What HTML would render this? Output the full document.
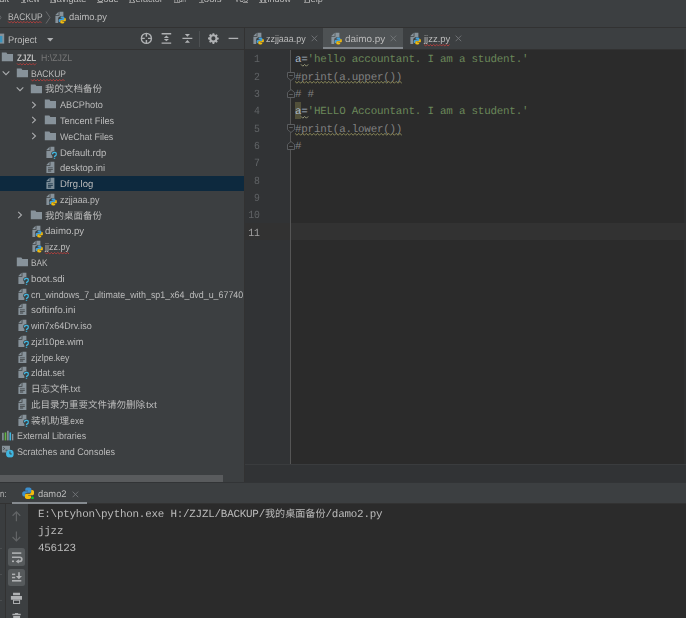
<!DOCTYPE html>
<html lang="zh"><head><meta charset="utf-8"><title>PyCharm</title>
<style>
html,body{margin:0;padding:0}
body{width:686px;height:618px;overflow:hidden;position:relative;background:#3c3f41;text-rendering:geometricPrecision;font-family:"Liberation Sans",sans-serif;font-size:9.6px;color:#bbb}
#root{position:absolute;left:0;top:0;width:686px;height:618px;overflow:hidden;filter:blur(.4px)}
.t{position:absolute;white-space:nowrap;transform-origin:0 50%;display:block}
.sx{display:inline-block;transform-origin:0 50%;white-space:nowrap}
.cjk{display:inline-block;white-space:nowrap;font-family:"Liberation Sans","Noto Sans CJK SC",sans-serif;font-size:9.5px;color:#bbb}
.ic{position:absolute;overflow:visible}
.box{position:absolute}
#tree{position:absolute;left:0;top:0;width:244px;height:482px;overflow:hidden}
.sel{position:absolute;left:0;width:244px;background:#0d293e}
.code{position:absolute;left:295.0px;height:17.34px;line-height:17.34px;font-family:"Liberation Mono",monospace;font-size:10.9px;white-space:pre;letter-spacing:-0.231px}
.con{left:38px;color:#bbb}
.ln{position:absolute;left:240px;width:20px;text-align:right;transform:scaleX(.9);transform-origin:100% 50%;height:17.34px;line-height:17.34px;font-family:"Liberation Mono",monospace;font-size:10.9px}
.caret{position:absolute;left:245px;width:441px;background:#323232}
.hl{position:absolute;background:#52503a}
</style></head>
<body>

<svg width="0" height="0" style="position:absolute">
<defs>
<symbol id="folder" viewBox="0 0 16 16"><path fill="#9aa7b0" fill-opacity=".8" d="M1,12.700H15V3.900H7.980L6.700,1.900H1Z"/></symbol>
<symbol id="txt" viewBox="0 0 16 16"><g fill="#9aa7b0" fill-opacity=".8"><path d="M7,1 3,5H7Z"/><path fill-rule="evenodd" d="M8,1V6H3V15H13V1ZM5,13V12H9V13ZM5,11V10H11V11ZM5,9V8H11V9Z"/></g></symbol>
<symbol id="unk" viewBox="0 0 16 16"><g fill="#9aa7b0" fill-opacity=".8"><path d="M7,1 3,5H7Z"/><path d="M8,1V6H3V15H10.500V12.500L9,10.500V8.500L11,6.500H13V1Z"/></g>
<path fill="none" stroke="#40b6e0" stroke-width="1.700" d="M10.600,10.200c0-3 5-3 5,0 0,2-2.500,1.700-2.500,3.700"/><rect x="12.200" y="14.700" width="1.800" height="1.600" fill="#40b6e0"/></symbol>
<symbol id="py" viewBox="0 0 16 16"><g fill="#9aa7b0" fill-opacity=".8"><path d="M7,1 3,5H7Z"/><path d="M8,1V6H3V15H6.5V8.5L9,6.500H13V1Z"/></g>
<g transform="translate(11.85 11.4) scale(.9) translate(-11.85 -11.5)"><path fill="#429fd6" d="M11.6,6.6c-1.5,0-2.4,.5-2.4,1.6v1.1h2.5v.5H8.3c-1.1,0-1.8,.8-1.8,2.3 0,1.5 .6,2.3 1.700,2.300h.9v-1.3c0-1 .8-1.8 1.9-1.8h2.3c.8,0 1.3-.6 1.3-1.4V8.200c0-1-.9-1.6-3-1.6z"/>
<path fill="#f2bc0e" d="M11.9,16.4c1.5,0 2.4-.5 2.4-1.6v-1.1h-2.5v-.5h3.4c1.1,0 1.8-.8 1.8-2.3 0-1.5-.6-2.3-1.7-2.3h-.9v1.3c0,1-.8,1.8-1.9,1.8h-2.3c-.8,0-1.3,.6-1.3,1.400v1.7c0,1 .9,1.6 3,1.6z"/></g></symbol>
<symbol id="pyrun" viewBox="0 0 16 16">
<path fill="#3c8fce" d="M7.9,.8c-2.3,0-3.6,.8-3.6,2.3v1.8h3.7v.7H2.9C1.3,5.600 .2,6.800 .2,9.000c0,2.200 .9,3.400 2.500,3.400h1.400v-2c0-1.500 1.200-2.700 2.800-2.700h3.500c1.200,0 2-.9 2-2.100V3.100c0-1.400-1.400-2.300-4.500-2.300z"/>
<path fill="#f2bc0e" d="M8.3,15.700c2.300,0 3.600-.8 3.600-2.300v-1.800H8.200v-.7h5.100c1.600,0 2.700-1.200 2.700-3.400 0-2.200-.9-3.400-2.500-3.400h-1.400v2c0,1.500-1.200,2.700-2.800,2.700H5.800c-1.200,0-2,.9-2,2.100v2.500c0,1.400 1.400,2.300 4.500,2.300z"/>
<circle cx="13.800" cy="14.300" r="1.800" fill="#12c52b"/></symbol>
<symbol id="ch_down" viewBox="0 0 16 16"><polyline fill="none" stroke="#a5a7a9" stroke-width="1.25" points="4.2,6.2 8,10 11.8,6.2"/></symbol>
<symbol id="ch_right" viewBox="0 0 16 16"><polyline fill="none" stroke="#a5a7a9" stroke-width="1.25" points="6.2,4.2 10,8 6.2,11.8"/></symbol>
<symbol id="libs" viewBox="0 0 16 16"><rect x="1.400" y="3.500" width="2" height="9.500" fill="#9aa7b0" fill-opacity=".8"/><rect x="4.600" y="3" width="2" height="10" fill="#62b543"/><rect x="7.600" y="1" width="2" height="12" fill="#9aa7b0" fill-opacity=".8"/><rect x="10.600" y="3" width="2" height="10" fill="#40b6e0"/><rect x="13.700" y="5" width="1.800" height="8" fill="#9aa7b0" fill-opacity=".8"/></symbol>
<symbol id="scr" viewBox="0 0 16 16"><path fill="#9aa7b0" fill-opacity=".8" d="M1.200,1H11.200V5.800A5,5 0 0 0 6.300,9.500H1.200Z"/><path fill="none" stroke="#3c3f41" stroke-width="1" d="M2.700,3 4.700,4.500 2.700,6M5.700,6.500H8"/><circle cx="11.200" cy="10.800" r="4.900" fill="#40b6e0"/><path fill="none" stroke="#3c3f41" stroke-width="1.200" d="M11.200,8V11.200H13.500"/></symbol>
<symbol id="projwin" viewBox="0 0 16 16"><rect x="1" y="2" width="13" height="12.500" fill="#9aa7b0" fill-opacity=".8"/><rect x="2.500" y="5" width="9.200" height="8" fill="#3a93bd"/></symbol>
<symbol id="locate" viewBox="0 0 16 16"><circle cx="8" cy="8" r="6.300" fill="none" stroke="#afb1b3" stroke-width="1.700"/><path stroke="#afb1b3" stroke-width="1.800" d="M8,1.500V6M8,10V14.500M1.500,8H6M10,8H14.500"/></symbol>
<symbol id="expandall" viewBox="0 0 16 16"><path fill="#afb1b3" d="M2,1.300H14V3H2ZM2,13H14V14.700H2ZM8,4.300 11.200,7.500H4.800ZM8,11.700 4.800,8.700H11.200Z"/></symbol>
<symbol id="collapseall" viewBox="0 0 16 16"><path fill="#afb1b3" d="M1.800,7.200H14.200V8.800H1.800ZM8,6 4.800,2.600H11.200ZM8,10 11.200,13.400H4.800Z"/></symbol>
<symbol id="gear" viewBox="0 0 16 16"><path transform="translate(8 8) scale(.93) translate(-8 -8)" fill="#afb1b3" fill-rule="evenodd" d="M6.900,1h2.200l.4,1.900 1.100,.5 1.700-1 1.500,1.500-1,1.700 .5,1.100 1.900,.4v2.200l-1.900,.4-.5,1.100 1,1.700-1.500,1.500-1.700-1-1.100,.5-.4,1.900H6.900l-.4-1.900-1.100-.5-1.700,1-1.500-1.500 1-1.700-.5-1.100L.8,9.100V6.900l1.900-.4 .5-1.100-1-1.700 1.500-1.500 1.700,1 1.100-.5zM8,5.200a2.800,2.800 0 1 0 0,5.600 2.800,2.800 0 0 0 0-5.600z"/></symbol>
<symbol id="minus" viewBox="0 0 16 16"><rect x="2" y="7.200" width="12" height="1.600" fill="#afb1b3"/></symbol>
<symbol id="close" viewBox="0 0 16 16"><path stroke="#74787a" stroke-width="1.100" fill="none" d="M4.500,4.500 11.500,11.500M11.500,4.500 4.500,11.500"/></symbol>
<symbol id="up" viewBox="0 0 16 16"><path fill="none" stroke="#afb1b3" stroke-width="1.500" d="M8,14V2.500M3.200,7.200 8,2.400 12.800,7.200"/></symbol>
<symbol id="down" viewBox="0 0 16 16"><path fill="none" stroke="#afb1b3" stroke-width="1.500" d="M8,2V13.500M3.200,8.800 8,13.600 12.800,8.800"/></symbol>
<symbol id="wrap" viewBox="0 0 16 16"><path fill="none" stroke="#afb1b3" stroke-width="1.800" d="M2,3.500H14M2,12.500H5M2,8H11.500a2.250,2.250 0 0 1 0,4.500H8.500"/><path fill="#afb1b3" d="M9.500,10 6.500,12.500 9.500,15Z"/></symbol>
<symbol id="scrollend" viewBox="0 0 16 16"><path fill="#afb1b3" d="M2,13H14V14.500H2ZM2,4H6V5.500H2ZM2,8H6V9.500H2ZM10,2H12V7.500H14.200L11,11.200 7.800,7.500H10Z"/></symbol>
<symbol id="print" viewBox="0 0 16 16"><path fill="#afb1b3" d="M3.800,.800H12.500V4H3.800ZM1.100,5H15V9.800H1.100Z"/><rect x="4.400" y="10.300" width="7.600" height="4.100" fill="none" stroke="#afb1b3" stroke-width="1.200"/></symbol>
<symbol id="trash" viewBox="0 0 16 16"><path fill="#afb1b3" d="M6.300,1.200H10.200V2.200H13.400V4.200H3V2.200H6.300ZM4,5.100H12.600V15H4Z"/></symbol>
<symbol id="fold_s" viewBox="0 0 8 9"><path fill="#2b2b2b" stroke="#606366" stroke-width=".9" d="M.5,.5H7.500V5.500L4,8.500 .5,5.500Z"/><path stroke="#606366" stroke-width=".9" d="M2.200,3.500H5.800"/></symbol>
<symbol id="fold_e" viewBox="0 0 8 9"><path fill="#2b2b2b" stroke="#606366" stroke-width=".9" d="M.5,8.500H7.500V3.500L4,.5 .5,3.500Z"/><path stroke="#606366" stroke-width=".9" d="M2.200,5.500H5.800"/></symbol>
</defs></svg>

<div id="root">
<!-- editor area -->
<div class="box" style="left:245px;top:50px;width:441px;height:414px;background:#2b2b2b"></div>
<div class="box" style="left:245px;top:50px;width:45px;height:414px;background:#313335"></div>
<div class="box" style="left:684px;top:50px;width:2px;height:414px;background:#2e2f30"></div>
<div class="box" style="left:245px;top:464px;width:441px;height:18px;background:#313335"></div>
<div class="box" style="left:245px;top:464px;width:441px;height:1px;background:#3a3c3e"></div>
<div class="box" style="left:0;top:27px;width:686px;height:1px;background:#323232"></div>
<div class="box" style="left:0;top:49px;width:686px;height:1px;background:#323232"></div>
<div class="box" style="left:244px;top:28px;width:1px;height:454px;background:#323232"></div>
<div class="caret" style="top:223px;height:17px"></div><div class="hl" style="left:294.8px;top:101.5px;width:6.3px;height:17.2px"></div>
<div class="box" style="left:290px;top:50px;width:1px;height:414px;background:#555555"></div>
<div class="code" style="top:52.30px"><span style="color:#a9b7c6">a=</span><span style="color:#6a8759">'hello accountant. I am a student.'</span></div><div class="code" style="top:69.64px"><span style="color:#808080">#print(a.upper())</span></div><div class="code" style="top:86.98px"><span style="color:#808080"># #</span></div><div class="code" style="top:104.32px"><span style="color:#a9b7c6">a=</span><span style="color:#6a8759">'HELLO Accountant. I am a student.'</span></div><div class="code" style="top:121.66px"><span style="color:#808080">#print(a.lower())</span></div><div class="code" style="top:139.00px"><span style="color:#808080">#</span></div><div class="ln" style="top:52.30px;color:#606366">1</div><div class="ln" style="top:69.64px;color:#606366">2</div><div class="ln" style="top:86.98px;color:#606366">3</div><div class="ln" style="top:104.32px;color:#606366">4</div><div class="ln" style="top:121.66px;color:#606366">5</div><div class="ln" style="top:139.00px;color:#606366">6</div><div class="ln" style="top:156.34px;color:#606366">7</div><div class="ln" style="top:173.68px;color:#606366">8</div><div class="ln" style="top:191.02px;color:#606366">9</div><div class="ln" style="top:208.36px;color:#606366">10</div><div class="ln" style="top:225.70px;color:#a4a3a3">11</div><svg class="ic" style="left:295.0px;top:80.8px;width:107.3px;height:2.8px" viewBox="0 0 107.3 2.8"><polyline fill="none" stroke="#8a8858" stroke-width="1.0" points="0.0,0.4 1.9,2.2 3.8,0.4 5.6,2.2 7.5,0.4 9.4,2.2 11.2,0.4 13.1,2.2 15.0,0.4 16.9,2.2 18.8,0.4 20.6,2.2 22.5,0.4 24.4,2.2 26.2,0.4 28.1,2.2 30.0,0.4 31.9,2.2 33.8,0.4 35.6,2.2 37.5,0.4 39.4,2.2 41.2,0.4 43.1,2.2 45.0,0.4 46.9,2.2 48.8,0.4 50.6,2.2 52.5,0.4 54.4,2.2 56.2,0.4 58.1,2.2 60.0,0.4 61.9,2.2 63.8,0.4 65.6,2.2 67.5,0.4 69.4,2.2 71.2,0.4 73.1,2.2 75.0,0.4 76.9,2.2 78.8,0.4 80.6,2.2 82.5,0.4 84.4,2.2 86.2,0.4 88.1,2.2 90.0,0.4 91.9,2.2 93.8,0.4 95.6,2.2 97.5,0.4 99.4,2.2 101.2,0.4 103.1,2.2 105.0,0.4 106.9,2.2"/></svg><svg class="ic" style="left:295.0px;top:132.9px;width:107.3px;height:2.8px" viewBox="0 0 107.3 2.8"><polyline fill="none" stroke="#8a8858" stroke-width="1.0" points="0.0,0.4 1.9,2.2 3.8,0.4 5.6,2.2 7.5,0.4 9.4,2.2 11.2,0.4 13.1,2.2 15.0,0.4 16.9,2.2 18.8,0.4 20.6,2.2 22.5,0.4 24.4,2.2 26.2,0.4 28.1,2.2 30.0,0.4 31.9,2.2 33.8,0.4 35.6,2.2 37.5,0.4 39.4,2.2 41.2,0.4 43.1,2.2 45.0,0.4 46.9,2.2 48.8,0.4 50.6,2.2 52.5,0.4 54.4,2.2 56.2,0.4 58.1,2.2 60.0,0.4 61.9,2.2 63.8,0.4 65.6,2.2 67.5,0.4 69.4,2.2 71.2,0.4 73.1,2.2 75.0,0.4 76.9,2.2 78.8,0.4 80.6,2.2 82.5,0.4 84.4,2.2 86.2,0.4 88.1,2.2 90.0,0.4 91.9,2.2 93.8,0.4 95.6,2.2 97.5,0.4 99.4,2.2 101.2,0.4 103.1,2.2 105.0,0.4 106.9,2.2"/></svg><svg class="ic" style="left:301.0px;top:63.5px;width:7.2px;height:2.8px" viewBox="0 0 7.2 2.8"><polyline fill="none" stroke="#9a9a78" stroke-width="1.0" points="0.0,0.4 1.8,2.2 3.6,0.4 5.4,2.2 7.2,0.4"/></svg><svg class="ic" style="left:301.0px;top:115.5px;width:7.2px;height:2.8px" viewBox="0 0 7.2 2.8"><polyline fill="none" stroke="#9a9a78" stroke-width="1.0" points="0.0,0.4 1.8,2.2 3.6,0.4 5.4,2.2 7.2,0.4"/></svg><svg class="ic" style="left:286.6px;top:71.84px;width:8px;height:9px" viewBox="0 0 8 9"><use href="#fold_s"/></svg><svg class="ic" style="left:286.6px;top:89.18px;width:8px;height:9px" viewBox="0 0 8 9"><use href="#fold_e"/></svg><svg class="ic" style="left:286.6px;top:123.86px;width:8px;height:9px" viewBox="0 0 8 9"><use href="#fold_s"/></svg><svg class="ic" style="left:286.6px;top:141.20px;width:8px;height:9px" viewBox="0 0 8 9"><use href="#fold_e"/></svg>
<!-- project tree -->
<div id="tree">
<svg class="ic" style="left:1.0px;top:51.0px;width:12.8px;height:12.8px;" viewBox="0 0 16 16"><use href="#folder"/></svg><span class="t " style="left:16.6px;top:50.95px;height:15.77px;line-height:15.77px;color:#bbb;font-size:9.6px;font-weight:bold;transform:scaleX(0.8422);">ZJZL</span><span class="t " style="left:40.6px;top:50.95px;height:15.77px;line-height:15.77px;color:#787878;font-size:9.6px;font-weight:normal;transform:scaleX(0.9117);">H:\ZJZL</span><svg class="ic" style="left:15.5px;top:66.8px;width:12.8px;height:12.8px;" viewBox="0 0 16 16"><use href="#folder"/></svg><svg class="ic" style="left:0.95px;top:67.77px;width:10px;height:10px" viewBox="-5 -5 10 10"><polyline fill="none" stroke="#adafb1" stroke-width="1.05" points="-3.3,-1.6 0,1.7 3.3,-1.6"/></svg><span class="t " style="left:31.1px;top:66.72px;height:15.77px;line-height:15.77px;color:#bbb;font-size:9.6px;font-weight:normal;transform:scaleX(0.8871);">BACKUP</span><svg class="ic" style="left:29.7px;top:82.6px;width:12.8px;height:12.8px;" viewBox="0 0 16 16"><use href="#folder"/></svg><svg class="ic" style="left:15.15px;top:83.54px;width:10px;height:10px" viewBox="-5 -5 10 10"><polyline fill="none" stroke="#adafb1" stroke-width="1.05" points="-3.3,-1.6 0,1.7 3.3,-1.6"/></svg><span class="t " style="left:45.1px;top:82.49px;height:15.77px;line-height:15.77px;color:#bbb;font-size:9.6px;font-weight:normal;"><span class="cjk" style="width:56.00px;">我的文档备份</span></span><svg class="ic" style="left:44.0px;top:98.4px;width:12.8px;height:12.8px;" viewBox="0 0 16 16"><use href="#folder"/></svg><svg class="ic" style="left:28.85px;top:99.51px;width:10px;height:10px" viewBox="-5 -5 10 10"><polyline fill="none" stroke="#adafb1" stroke-width="1.05" points="-1.8,-3.1 1.5,0 -1.8,3.1"/></svg><span class="t " style="left:59.5px;top:98.26px;height:15.77px;line-height:15.77px;color:#bbb;font-size:9.6px;font-weight:normal;transform:scaleX(0.9554);">ABCPhoto</span><svg class="ic" style="left:44.0px;top:114.1px;width:12.8px;height:12.8px;" viewBox="0 0 16 16"><use href="#folder"/></svg><svg class="ic" style="left:28.85px;top:115.28px;width:10px;height:10px" viewBox="-5 -5 10 10"><polyline fill="none" stroke="#adafb1" stroke-width="1.05" points="-1.8,-3.1 1.5,0 -1.8,3.1"/></svg><span class="t " style="left:59.5px;top:114.03px;height:15.77px;line-height:15.77px;color:#bbb;font-size:9.6px;font-weight:normal;transform:scaleX(0.9589);">Tencent Files</span><svg class="ic" style="left:44.0px;top:129.9px;width:12.8px;height:12.8px;" viewBox="0 0 16 16"><use href="#folder"/></svg><svg class="ic" style="left:28.85px;top:131.05px;width:10px;height:10px" viewBox="-5 -5 10 10"><polyline fill="none" stroke="#adafb1" stroke-width="1.05" points="-1.8,-3.1 1.5,0 -1.8,3.1"/></svg><span class="t " style="left:59.5px;top:129.80px;height:15.77px;line-height:15.77px;color:#bbb;font-size:9.6px;font-weight:normal;transform:scaleX(0.9285);">WeChat Files</span><svg class="ic" style="left:44.0px;top:145.7px;width:12.8px;height:12.8px;" viewBox="0 0 16 16"><use href="#unk"/></svg><span class="t " style="left:59.5px;top:145.57px;height:15.77px;line-height:15.77px;color:#bbb;font-size:9.6px;font-weight:normal;transform:scaleX(0.9866);">Default.rdp</span><svg class="ic" style="left:44.0px;top:161.4px;width:12.8px;height:12.8px;" viewBox="0 0 16 16"><use href="#txt"/></svg><span class="t " style="left:59.5px;top:161.34px;height:15.77px;line-height:15.77px;color:#bbb;font-size:9.6px;font-weight:normal;transform:scaleX(0.9833);">desktop.ini</span><div class="sel" style="top:176px;height:15px"></div><svg class="ic" style="left:44.0px;top:177.2px;width:12.8px;height:12.8px;" viewBox="0 0 16 16"><use href="#txt"/></svg><span class="t " style="left:59.5px;top:177.11px;height:15.77px;line-height:15.77px;color:#bbb;font-size:9.6px;font-weight:normal;transform:scaleX(0.9883);">Dfrg.log</span><svg class="ic" style="left:44.0px;top:193.0px;width:12.8px;height:12.8px;" viewBox="0 0 16 16"><use href="#py"/></svg><span class="t " style="left:59.5px;top:192.88px;height:15.77px;line-height:15.77px;color:#bbb;font-size:9.6px;font-weight:normal;transform:scaleX(0.9212);">zzjjaaa.py</span><svg class="ic" style="left:29.7px;top:208.8px;width:12.8px;height:12.8px;" viewBox="0 0 16 16"><use href="#folder"/></svg><svg class="ic" style="left:14.65px;top:209.90px;width:10px;height:10px" viewBox="-5 -5 10 10"><polyline fill="none" stroke="#adafb1" stroke-width="1.05" points="-1.8,-3.1 1.5,0 -1.8,3.1"/></svg><span class="t " style="left:45.1px;top:208.65px;height:15.77px;line-height:15.77px;color:#bbb;font-size:9.6px;font-weight:normal;"><span class="cjk" style="width:55.90px;">我的桌面备份</span></span><svg class="ic" style="left:29.7px;top:224.5px;width:12.8px;height:12.8px;" viewBox="0 0 16 16"><use href="#py"/></svg><span class="t " style="left:45.1px;top:224.42px;height:15.77px;line-height:15.77px;color:#bbb;font-size:9.6px;font-weight:normal;transform:scaleX(1.0070);">daimo.py</span><svg class="ic" style="left:29.7px;top:240.3px;width:12.8px;height:12.8px;" viewBox="0 0 16 16"><use href="#py"/></svg><span class="t " style="left:45.1px;top:240.19px;height:15.77px;line-height:15.77px;color:#bbb;font-size:9.6px;font-weight:normal;transform:scaleX(0.9342);">jjzz.py</span><svg class="ic" style="left:15.5px;top:256.1px;width:12.8px;height:12.8px;" viewBox="0 0 16 16"><use href="#folder"/></svg><span class="t " style="left:31.1px;top:255.96px;height:15.77px;line-height:15.77px;color:#bbb;font-size:9.6px;font-weight:normal;transform:scaleX(0.8595);">BAK</span><svg class="ic" style="left:15.5px;top:271.8px;width:12.8px;height:12.8px;" viewBox="0 0 16 16"><use href="#unk"/></svg><span class="t " style="left:31.1px;top:271.73px;height:15.77px;line-height:15.77px;color:#bbb;font-size:9.6px;font-weight:normal;transform:scaleX(1.0000);">boot.sdi</span><svg class="ic" style="left:15.5px;top:287.6px;width:12.8px;height:12.8px;" viewBox="0 0 16 16"><use href="#unk"/></svg><span class="t" style="left:31.1px;top:287.50px;height:15.77px;line-height:15.77px;color:#bbb;font-size:9.6px;transform:scaleX(0.9252)">cn_windows_7_ultimate_with_sp1_x64_dvd_u_67740</span><svg class="ic" style="left:15.5px;top:303.4px;width:12.8px;height:12.8px;" viewBox="0 0 16 16"><use href="#txt"/></svg><span class="t " style="left:31.1px;top:303.27px;height:15.77px;line-height:15.77px;color:#bbb;font-size:9.6px;font-weight:normal;transform:scaleX(1.0302);">softinfo.ini</span><svg class="ic" style="left:15.5px;top:319.1px;width:12.8px;height:12.8px;" viewBox="0 0 16 16"><use href="#unk"/></svg><span class="t " style="left:31.1px;top:319.04px;height:15.77px;line-height:15.77px;color:#bbb;font-size:9.6px;font-weight:normal;transform:scaleX(0.9435);">win7x64Drv.iso</span><svg class="ic" style="left:15.5px;top:334.9px;width:12.8px;height:12.8px;" viewBox="0 0 16 16"><use href="#unk"/></svg><span class="t " style="left:31.1px;top:334.81px;height:15.77px;line-height:15.77px;color:#bbb;font-size:9.6px;font-weight:normal;transform:scaleX(0.9560);">zjzl10pe.wim</span><svg class="ic" style="left:15.5px;top:350.7px;width:12.8px;height:12.8px;" viewBox="0 0 16 16"><use href="#txt"/></svg><span class="t " style="left:31.1px;top:350.58px;height:15.77px;line-height:15.77px;color:#bbb;font-size:9.6px;font-weight:normal;transform:scaleX(0.9140);">zjzlpe.key</span><svg class="ic" style="left:15.5px;top:366.4px;width:12.8px;height:12.8px;" viewBox="0 0 16 16"><use href="#unk"/></svg><span class="t " style="left:31.1px;top:366.35px;height:15.77px;line-height:15.77px;color:#bbb;font-size:9.6px;font-weight:normal;transform:scaleX(0.9404);">zldat.set</span><svg class="ic" style="left:15.5px;top:382.2px;width:12.8px;height:12.8px;" viewBox="0 0 16 16"><use href="#txt"/></svg><span class="t " style="left:31.1px;top:382.12px;height:15.77px;line-height:15.77px;color:#bbb;font-size:9.6px;font-weight:normal;"><span class="cjk" style="width:37.32px;">日志文件</span><span class="sx" style="transform:scaleX(0.9677)">.txt</span></span><svg class="ic" style="left:15.5px;top:398.0px;width:12.8px;height:12.8px;" viewBox="0 0 16 16"><use href="#txt"/></svg><span class="t " style="left:31.1px;top:397.89px;height:15.77px;line-height:15.77px;color:#bbb;font-size:9.6px;font-weight:normal;"><span class="cjk" style="width:111.96px;">此目录为重要文件请勿删除</span><span class="sx" style="transform:scaleX(1.0896)">.txt</span></span><svg class="ic" style="left:15.5px;top:413.8px;width:12.8px;height:12.8px;" viewBox="0 0 16 16"><use href="#unk"/></svg><span class="t " style="left:31.1px;top:413.66px;height:15.77px;line-height:15.77px;color:#bbb;font-size:9.6px;font-weight:normal;"><span class="cjk" style="width:37.32px;">装机助理</span><span class="sx" style="transform:scaleX(0.8757)">.exe</span></span><svg class="ic" style="left:1.0px;top:429.5px;width:12.8px;height:12.8px;" viewBox="0 0 16 16"><use href="#libs"/></svg><span class="t " style="left:16.6px;top:429.43px;height:15.77px;line-height:15.77px;color:#bbb;font-size:9.6px;font-weight:normal;transform:scaleX(0.9256);">External Libraries</span><svg class="ic" style="left:1.0px;top:445.3px;width:12.8px;height:12.8px;" viewBox="0 0 16 16"><use href="#scr"/></svg><span class="t " style="left:16.6px;top:445.20px;height:15.77px;line-height:15.77px;color:#bbb;font-size:9.6px;font-weight:normal;transform:scaleX(0.9424);">Scratches and Consoles</span><svg class="ic" style="left:16.6px;top:62.9px;width:19.3px;height:2.6px" viewBox="0 0 19.3 2.6"><polyline fill="none" stroke="#bc3f3c" stroke-width="0.9" points="0.0,0.4 1.6,2.0 3.2,0.4 4.8,2.0 6.4,0.4 8.0,2.0 9.6,0.4 11.2,2.0 12.8,0.4 14.4,2.0 16.0,0.4 17.6,2.0 19.2,0.4"/></svg><svg class="ic" style="left:31.1px;top:78.7px;width:35.0px;height:2.6px" viewBox="0 0 35.0 2.6"><polyline fill="none" stroke="#bc3f3c" stroke-width="0.9" points="0.0,0.4 1.6,2.0 3.2,0.4 4.8,2.0 6.4,0.4 8.0,2.0 9.6,0.4 11.2,2.0 12.8,0.4 14.4,2.0 16.0,0.4 17.6,2.0 19.2,0.4 20.8,2.0 22.4,0.4 24.0,2.0 25.6,0.4 27.2,2.0 28.8,0.4 30.4,2.0 32.0,0.4 33.6,2.0"/></svg><svg class="ic" style="left:45.1px;top:252.1px;width:24.9px;height:2.6px" viewBox="0 0 24.9 2.6"><polyline fill="none" stroke="#bc3f3c" stroke-width="0.9" points="0.0,0.4 1.6,2.0 3.2,0.4 4.8,2.0 6.4,0.4 8.0,2.0 9.6,0.4 11.2,2.0 12.8,0.4 14.4,2.0 16.0,0.4 17.6,2.0 19.2,0.4 20.8,2.0 22.4,0.4 24.0,2.0"/></svg>
<div class="box" style="left:0;top:475px;width:223px;height:7px;background:#595b5d"></div>
</div>
<!-- run tool window -->
<div class="box" style="left:0;top:482px;width:686px;height:22px;background:#3c3f41"></div>
<div class="box" style="left:0;top:482px;width:686px;height:1px;background:#323436"></div>
<div class="box" style="left:28px;top:504px;width:658px;height:114px;background:#2b2b2b"></div>
<div class="box" style="left:0;top:503px;width:686px;height:1px;background:#323232"></div>
<div class="box" style="left:0;top:504px;width:5px;height:114px;background:#3a3d3f"></div>
<div class="box" style="left:5px;top:504px;width:1px;height:114px;background:#323232"></div>
<div class="box" style="left:0;top:548px;width:2px;height:1px;background:#4b4e50"></div><div class="box" style="left:0;top:574px;width:2px;height:1px;background:#4b4e50"></div><div class="box" style="left:0;top:600px;width:2px;height:1px;background:#4b4e50"></div>
<div class="code con" style="top:506.80px">E:\ptyhon\python.exe H:/ZJZL/BACKUP/<span style="display:inline-block;width:60.60px;font-family:'Liberation Mono','Noto Sans CJK SC',monospace;font-size:10.1px;letter-spacing:0;color:#bbb;white-space:nowrap">我的桌面备份</span>/damo2.py</div><div class="code con" style="top:524.14px">jjzz</div><div class="code con" style="top:541.48px">456123</div>
<span class="t " style="left:-7.5px;top:-6.45px;height:12.00px;line-height:12.00px;color:#bbb;font-size:9.6px;font-weight:normal;transform:scaleX(0.9679);text-decoration:none">Edit</span><span class="t " style="left:20.6px;top:-6.45px;height:12.00px;line-height:12.00px;color:#bbb;font-size:9.6px;font-weight:normal;transform:scaleX(0.9165);text-decoration:none">View</span><span class="t " style="left:50.2px;top:-6.45px;height:12.00px;line-height:12.00px;color:#bbb;font-size:9.6px;font-weight:normal;transform:scaleX(0.9587);text-decoration:none">Navigate</span><span class="t " style="left:96.6px;top:-6.45px;height:12.00px;line-height:12.00px;color:#bbb;font-size:9.6px;font-weight:normal;transform:scaleX(0.9418);text-decoration:none">Code</span><span class="t " style="left:129.0px;top:-6.45px;height:12.00px;line-height:12.00px;color:#bbb;font-size:9.6px;font-weight:normal;transform:scaleX(0.9322);text-decoration:none">Refactor</span><span class="t " style="left:174.0px;top:-6.45px;height:12.00px;line-height:12.00px;color:#bbb;font-size:9.6px;font-weight:normal;transform:scaleX(0.6818);text-decoration:none">Run</span><span class="t " style="left:199.0px;top:-6.45px;height:12.00px;line-height:12.00px;color:#bbb;font-size:9.6px;font-weight:normal;transform:scaleX(1.0047);text-decoration:none">Tools</span><span class="t " style="left:234.7px;top:-6.45px;height:12.00px;line-height:12.00px;color:#bbb;font-size:9.6px;font-weight:normal;transform:scaleX(0.6489);text-decoration:none">VCS</span><span class="t " style="left:258.5px;top:-6.45px;height:12.00px;line-height:12.00px;color:#bbb;font-size:9.6px;font-weight:normal;transform:scaleX(0.9378);text-decoration:none">Window</span><span class="t " style="left:304.2px;top:-6.45px;height:12.00px;line-height:12.00px;color:#bbb;font-size:9.6px;font-weight:normal;transform:scaleX(0.9528);text-decoration:none">Help</span><div style="position:absolute;left:20.6px;top:2px;width:5px;height:1px;background:#909090"></div><div style="position:absolute;left:50.2px;top:2px;width:6px;height:1px;background:#909090"></div><div style="position:absolute;left:96.6px;top:2px;width:6px;height:1px;background:#909090"></div><div style="position:absolute;left:129px;top:2px;width:5.5px;height:1px;background:#909090"></div><div style="position:absolute;left:174px;top:2px;width:5.5px;height:1px;background:#909090"></div><div style="position:absolute;left:199px;top:2px;width:5px;height:1px;background:#909090"></div><div style="position:absolute;left:243px;top:2px;width:4.5px;height:1px;background:#909090"></div><div style="position:absolute;left:258.5px;top:2px;width:8px;height:1px;background:#909090"></div><div style="position:absolute;left:304.2px;top:2px;width:6px;height:1px;background:#909090"></div><span class="t " style="left:7.6px;top:10.45px;height:16.00px;line-height:16.00px;color:#bbb;font-size:9.6px;font-weight:normal;transform:scaleX(0.8770);">BACKUP</span><svg class="ic" style="left:7.6px;top:21.3px;width:34.6px;height:2.6px" viewBox="0 0 34.6 2.6"><polyline fill="none" stroke="#bc3f3c" stroke-width="0.9" points="0.0,0.4 1.6,2.0 3.2,0.4 4.8,2.0 6.4,0.4 8.0,2.0 9.6,0.4 11.2,2.0 12.8,0.4 14.4,2.0 16.0,0.4 17.6,2.0 19.2,0.4 20.8,2.0 22.4,0.4 24.0,2.0 25.6,0.4 27.2,2.0 28.8,0.4 30.4,2.0 32.0,0.4 33.6,2.0"/></svg><span class="t " style="left:68.8px;top:10.45px;height:16.00px;line-height:16.00px;color:#bbb;font-size:9.6px;font-weight:normal;transform:scaleX(0.9736);">daimo.py</span><svg class="ic" style="left:52.9px;top:10.5px;width:12.8px;height:12.8px;" viewBox="0 0 16 16"><use href="#py"/></svg><svg class="ic" style="left:44.5px;top:10.5px;width:6px;height:13px" viewBox="0 0 6 13"><polyline fill="none" stroke="#686b6d" stroke-width="1" points="1,0.5 5,6.5 1,12.5"/></svg><svg class="ic" style="left:-4px;top:10.5px;width:6px;height:13px" viewBox="0 0 6 13"><polyline fill="none" stroke="#686b6d" stroke-width="1" points="1,0.5 5,6.5 1,12.5"/></svg><span class="t " style="left:8.2px;top:32.55px;height:16.00px;line-height:16.00px;color:#bbb;font-size:9.6px;font-weight:normal;transform:scaleX(0.9679);">Project</span><svg class="ic" style="left:47.4px;top:37.6px;width:6.4px;height:3.6px" viewBox="0 0 8 4.5"><path d="M0,0h8L4,4.5z" fill="#afb1b3"/></svg><svg class="ic" style="left:-7.0px;top:32.4px;width:12.8px;height:12.8px;" viewBox="0 0 16 16"><use href="#projwin"/></svg><svg class="ic" style="left:139.5px;top:32.4px;width:12.8px;height:12.8px;" viewBox="0 0 16 16"><use href="#locate"/></svg><svg class="ic" style="left:160.0px;top:32.2px;width:12.8px;height:12.8px;" viewBox="0 0 16 16"><use href="#expandall"/></svg><svg class="ic" style="left:180.6px;top:32.2px;width:12.8px;height:12.8px;" viewBox="0 0 16 16"><use href="#collapseall"/></svg><div style="position:absolute;left:199.4px;top:30.5px;width:1px;height:16px;background:#4d5052"></div><svg class="ic" style="left:206.5px;top:32.2px;width:12.8px;height:12.8px;" viewBox="0 0 16 16"><use href="#gear"/></svg><svg class="ic" style="left:227.2px;top:32.3px;width:12.8px;height:12.8px;" viewBox="0 0 16 16"><use href="#minus"/></svg><div style="position:absolute;left:323px;top:28px;width:80px;height:21px;background:#4e5254"></div><div style="position:absolute;left:323px;top:46.8px;width:80px;height:2.7px;background:#80858a"></div><svg class="ic" style="left:250.6px;top:32.0px;width:12.8px;height:12.8px;" viewBox="0 0 16 16"><use href="#py"/></svg><span class="t " style="left:266.2px;top:32.15px;height:16.00px;line-height:16.00px;color:#bbb;font-size:9.6px;font-weight:normal;transform:scaleX(0.9282);">zzjjaaa.py</span><svg class="ic" style="left:307.9px;top:32.4px;width:12.8px;height:12.8px;" viewBox="0 0 16 16"><use href="#close"/></svg><svg class="ic" style="left:329.3px;top:32.0px;width:12.8px;height:12.8px;" viewBox="0 0 16 16"><use href="#py"/></svg><span class="t " style="left:345.0px;top:32.15px;height:16.00px;line-height:16.00px;color:#bbb;font-size:9.6px;font-weight:normal;transform:scaleX(1.0327);">daimo.py</span><svg class="ic" style="left:387.2px;top:32.4px;width:12.8px;height:12.8px;" viewBox="0 0 16 16"><use href="#close"/></svg><svg class="ic" style="left:408.3px;top:32.0px;width:12.8px;height:12.8px;" viewBox="0 0 16 16"><use href="#py"/></svg><span class="t " style="left:423.7px;top:32.15px;height:16.00px;line-height:16.00px;color:#bbb;font-size:9.6px;font-weight:normal;transform:scaleX(0.9867);">jjzz.py</span><svg class="ic" style="left:452.2px;top:32.4px;width:12.8px;height:12.8px;" viewBox="0 0 16 16"><use href="#close"/></svg><svg class="ic" style="left:423.7px;top:44.4px;width:26.3px;height:2.6px" viewBox="0 0 26.3 2.6"><polyline fill="none" stroke="#bc3f3c" stroke-width="0.9" points="0.0,0.4 1.6,2.0 3.2,0.4 4.8,2.0 6.4,0.4 8.0,2.0 9.6,0.4 11.2,2.0 12.8,0.4 14.4,2.0 16.0,0.4 17.6,2.0 19.2,0.4 20.8,2.0 22.4,0.4 24.0,2.0 25.6,0.4"/></svg><span class="t " style="left:0.0px;top:487.35px;height:16.00px;line-height:16.00px;color:#bbb;font-size:9.6px;font-weight:normal;transform:scaleX(0.7749);">n:</span><svg class="ic" style="left:21.7px;top:487.4px;width:12.2px;height:12.2px;" viewBox="0 0 16 16"><use href="#pyrun"/></svg><span class="t " style="left:37.6px;top:487.35px;height:16.00px;line-height:16.00px;color:#bbb;font-size:9.6px;font-weight:normal;transform:scaleX(0.9716);">damo2</span><svg class="ic" style="left:68.5px;top:487.8px;width:12.8px;height:12.8px;" viewBox="0 0 16 16"><use href="#close"/></svg><div style="position:absolute;left:12px;top:501.9px;width:75.2px;height:2.4px;background:#858a8f"></div><svg class="ic" style="left:10.0px;top:509.6px;width:12.8px;height:12.8px;opacity:.33" viewBox="0 0 16 16"><use href="#up"/></svg><svg class="ic" style="left:10.0px;top:530.2px;width:12.8px;height:12.8px;opacity:.33" viewBox="0 0 16 16"><use href="#down"/></svg><div style="position:absolute;left:8px;top:548.3px;width:17px;height:17.5px;background:#565a5c;border-radius:2.5px"></div><svg class="ic" style="left:8px;top:548px;width:18px;height:18px" viewBox="8 548 18 18"><g fill="#afb1b3"><rect x="12" y="552.300" width="9.300" height="1.600"/><rect x="12" y="560.500" width="2" height="1.600"/><path d="M18.900,559.200 15.700,561.400 18.900,563.600Z"/></g><path fill="none" stroke="#afb1b3" stroke-width="1.600" d="M12,557.300H19.800A2.050,2.050 0 0 1 19.800,561.400H18.500"/></svg><div style="position:absolute;left:8px;top:569.1px;width:17px;height:17.2px;background:#565a5c;border-radius:2.5px"></div><svg class="ic" style="left:8px;top:568px;width:18px;height:19px" viewBox="8 568 18 19"><g fill="#afb1b3"><rect x="12" y="573.600" width="3.200" height="1.500"/><rect x="12" y="576.800" width="3.200" height="1.500"/><rect x="12" y="580" width="9.300" height="1.600"/><rect x="18.200" y="572.200" width="1.600" height="4.200"/><path d="M15.800,576 22,576 18.900,579.300Z"/></g></svg><svg class="ic" style="left:10.1px;top:592.4px;width:12.8px;height:12.8px;" viewBox="0 0 16 16"><use href="#print"/></svg><svg class="ic" style="left:10.1px;top:611.9px;width:12.8px;height:12.8px;" viewBox="0 0 16 16"><use href="#trash"/></svg>
</div>
</body></html>
